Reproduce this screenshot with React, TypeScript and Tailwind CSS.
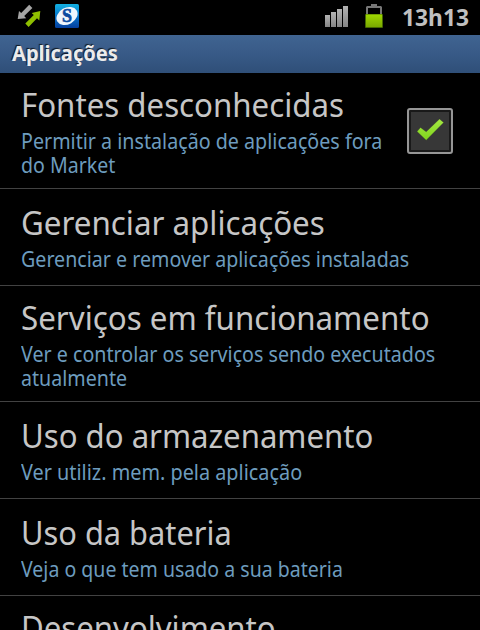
import clsx from "clsx";

type Line = { text: string; fit: string };

type Setting = {
  title: Line;
  summary: Line[];
  checked?: boolean;
  tall?: boolean;
};

const settings: Setting[] = [
  {
    title: { text: "Fontes desconhecidas", fit: "scale-x-[0.946]" },
    summary: [
      { text: "Permitir a instalação de aplicações fora", fit: "scale-x-[0.895]" },
      { text: "do Market", fit: "scale-x-[0.89]" },
    ],
    checked: true,
    tall: true,
  },
  {
    title: { text: "Gerenciar aplicações", fit: "scale-x-[0.949]" },
    summary: [{ text: "Gerenciar e remover aplicações instaladas", fit: "scale-x-[0.893]" }],
  },
  {
    title: { text: "Serviços em funcionamento", fit: "scale-x-[0.948]" },
    summary: [
      { text: "Ver e controlar os serviços sendo executados", fit: "scale-x-[0.894]" },
      { text: "atualmente", fit: "scale-x-[0.893]" },
    ],
    tall: true,
  },
  {
    title: { text: "Uso do armazenamento", fit: "scale-x-[0.943]" },
    summary: [{ text: "Ver utiliz. mem. pela aplicação", fit: "scale-x-[0.902]" }],
  },
  {
    title: { text: "Uso da bateria", fit: "scale-x-[0.933]" },
    summary: [{ text: "Veja o que tem usado a sua bateria", fit: "scale-x-[0.888]" }],
  },
  { title: { text: "Desenvolvimento", fit: "scale-x-[0.944]" }, summary: [], tall: true },
];

function SyncIcon() {
  return (
    <svg width="24" height="24" viewBox="0 0 24 24">
      <path d="M.7 15 2 7 4.200 9 12.200.8 15.400 4 7.200 12 9.200 14.300Z" fill="#a5a5a5" />
      <path d="M23.300 7 14.700 9 16.800 11 8.300 19.500 11.600 23 20 14.300 22.300 16.500Z" fill="#8fbf00" />
    </svg>
  );
}

function SIcon() {
  return (
    <svg width="24" height="24" viewBox="0 0 24 24">
      <defs>
        <linearGradient id="tile" x1="0" y1="0" x2="0" y2="1">
          <stop offset="0" stopColor="#12b0e0" />
          <stop offset="0.5" stopColor="#0876cc" />
          <stop offset="1" stopColor="#043f9e" />
        </linearGradient>
      </defs>
      <rect width="24" height="24" rx="1.500" fill="url(#tile)" />
      <ellipse cx="12" cy="12" rx="11.200" ry="8.300" transform="rotate(-30 12 12)" fill="#eef6fd" />
      <text
        x="12"
        y="17.800"
        textAnchor="middle"
        fill="#0b4ba0"
        stroke="#0b4ba0"
        strokeWidth="0.600"
        className="font-['Liberation_Serif',serif] text-[18px] font-bold"
      >
        S
      </text>
    </svg>
  );
}

function SignalIcon() {
  return (
    <svg width="24" height="23" viewBox="0 0 24 23">
      <defs>
        <linearGradient id="bars" x1="0" y1="0" x2="0" y2="1">
          <stop offset="0" stopColor="#b2b2b2" />
          <stop offset="1" stopColor="#858585" />
        </linearGradient>
      </defs>
      <g fill="url(#bars)">
        <rect x="0" y="10" width="5" height="12" />
        <rect x="6" y="7" width="5" height="15" />
        <rect x="12" y="4" width="5" height="18" />
        <rect x="18" y="1" width="5" height="21" />
      </g>
    </svg>
  );
}

function BatteryIcon() {
  return (
    <svg width="20" height="26" viewBox="0 0 20 26">
      <defs>
        <linearGradient id="charge" x1="0" y1="0" x2="0" y2="1">
          <stop offset="0" stopColor="#9fd800" />
          <stop offset="1" stopColor="#7aa800" />
        </linearGradient>
      </defs>
      <path d="M7 1h6v2h4l1 1v8h-2V5H4v7H2V4l1-1h4Z" fill="#777" />
      <rect x="1" y="11" width="18" height="14" rx="1" fill="#456800" />
      <rect x="2" y="11.500" width="16" height="12.500" fill="url(#charge)" />
    </svg>
  );
}

function Checkbox() {
  return (
    <div className="flex size-[46px] items-center justify-center rounded-[3px] border-2 border-[#969696] bg-[#191919]">
      <svg width="38" height="38" viewBox="0 0 38 38">
        <defs>
          <linearGradient id="check" x1="0" y1="0" x2="0" y2="1">
            <stop offset="0" stopColor="#a5e843" />
            <stop offset="1" stopColor="#7fd41c" />
          </linearGradient>
        </defs>
        <rect width="38" height="38" fill="#373737" />
        <path
          d="M6 19.500 9.500 15.500l5.700 4.300L28.500 7 32.700 10.500 15.200 28.200Z"
          fill="url(#check)"
          stroke="#2a2a2a"
          strokeWidth="0.300"
        />
      </svg>
    </div>
  );
}

function StatusBar() {
  return (
    <div className="flex h-[35px] items-start pl-[17px] pr-[11px]">
      <div className="flex gap-[14px] pt-1">
        <SyncIcon />
        <SIcon />
      </div>
      <div className="ml-auto flex items-start">
        <div className="pt-[5px]">
          <SignalIcon />
        </div>
        <div className="ml-[15px] pt-[3px]">
          <BatteryIcon />
        </div>
        <div className="ml-[18px] w-[67px]">
          <div className="w-max origin-left scale-x-[0.95] text-2xl leading-[34px] font-bold text-[#c0c0c0]">
            13h13
          </div>
        </div>
      </div>
    </div>
  );
}

function Row({ title, summary, checked, tall }: Setting) {
  return (
    <div
      className={clsx(
        "flex shrink-0 border-b border-[#424242] pl-[21px] pr-[27px]",
        tall ? "h-[116px] pt-[9px]" : "h-[97px] pt-[11px]"
      )}
    >
      <div className="min-w-0 flex-1 whitespace-nowrap">
        <h2 className={clsx("w-max origin-left text-[33px] leading-[46px] text-[#c6c6c6]", title.fit)}>
          {title.text}
        </h2>
        {summary.map((line) => (
          <p key={line.text} className={clsx("w-max origin-left text-[22px] leading-6 text-[#6d9cbe]", line.fit)}>
            {line.text}
          </p>
        ))}
      </div>
      {checked && (
        <div className="pt-[26px]">
          <Checkbox />
        </div>
      )}
    </div>
  );
}

export default function App() {
  return (
    <div className="flex h-[630px] w-[480px] flex-col overflow-hidden bg-black font-['Noto_Sans',sans-serif]">
      <StatusBar />
      <header className="h-[38px] shrink-0 bg-linear-to-b from-[#406491] via-[#385a87] to-[#2f4f78] pl-3">
        <h1 className="w-max origin-left scale-x-[0.955] text-[21px] leading-[37px] font-bold text-[#ececec] [text-shadow:-1px_-1px_1px_#101820]">
          Aplicações
        </h1>
      </header>
      <main className="flex min-h-0 flex-1 flex-col overflow-hidden">
        {settings.map((s) => (
          <Row key={s.title.text} {...s} />
        ))}
      </main>
    </div>
  );
}
